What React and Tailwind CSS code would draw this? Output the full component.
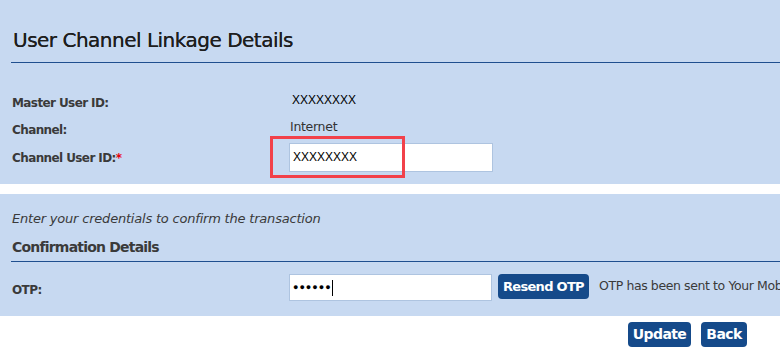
import React from 'react';

const font = { fontFamily: '"DejaVu Sans", Verdana, sans-serif' };

const Label = ({ children, required }) => (
  <div className="text-[12px] font-bold text-[#3a3a3a] tracking-[-0.6px]">
    {children}
    {required && <span className="text-red-600">*</span>}
  </div>
);

const BlueButton = ({ children, className = '' }) => (
  <button
    className={`h-[25px] rounded-[4px] bg-[#154a8a] text-white font-bold ${className}`}
  >
    {children}
  </button>
);

const App = () => {
  return (
    <div className="w-[780px] h-[353px] bg-white overflow-hidden" style={font}>
      {/* Detalles de la vinculación */}
      <div className="h-[184px] bg-[#c7d9f1] pt-[27px]">
        <div className="ml-[11px] border-b border-[#1f4f8f] pb-[9px] pl-[2px]">
          <h1 className="text-[20px] leading-[26px] text-[#1e1e1e] tracking-[-0.5px] [text-shadow:0_0_0.4px_#1e1e1e]">
            User Channel Linkage Details
          </h1>
        </div>

        <div className="pl-[12px] mt-[28px] grid grid-cols-[277px_1fr] items-center">
          <div className="h-[22px] flex items-center pt-[2px]"><Label>Master User ID:</Label></div>
          <div className="h-[22px] flex items-center pl-[3px] pb-[5px] text-[12px] text-black" style={{ fontFamily: '"Liberation Sans", Arial, sans-serif' }}>
            XXXXXXXX
          </div>

          <div className="h-[29px] flex items-center pt-[4px]"><Label>Channel:</Label></div>
          <div className="h-[29px] flex items-center pl-[1px] text-[12.5px] text-[#333] tracking-[-0.3px]">
            Internet
          </div>

          <div className="h-[30px] flex items-center pt-[2px]"><Label required>Channel User ID:</Label></div>
          <div className="h-[30px] flex items-center">
            <div className="relative">
              <input
                readOnly
                value="XXXXXXXX"
                className="w-[204px] h-[29px] bg-white border border-[#aec4e0] pl-[3px] text-[12px] text-black outline-none"
                style={{ fontFamily: '"Liberation Sans", Arial, sans-serif' }}
              />
              <div className="absolute left-[-19px] top-[-7px] w-[135px] h-[42px] border-[3px] border-[#f2414a]" />
            </div>
          </div>
        </div>
      </div>

      {/* Confirmación */}
      <div className="mt-[10px] h-[122px] bg-[#c7d9f1] pt-[16px]">
        <p className="pl-[12px] text-[13px] italic text-[#3a3a3a] tracking-[-0.2px] leading-[18px]">
          Enter your credentials to confirm the transaction
        </p>
        <div className="ml-[11px] mt-[10px] border-b border-[#1f4f8f] pb-[5px] pl-[1px]">
          <h2 className="text-[14px] font-bold text-[#3a3a3a] tracking-[-0.8px] leading-[18px]">
            Confirmation Details
          </h2>
        </div>
        <div className="pl-[12px] mt-[12px] grid grid-cols-[277px_1fr] items-center">
          <div className="pt-[4px]"><Label>OTP:</Label></div>
          <div className="flex items-center gap-[6px]">
            <div className="w-[203px] h-[27px] bg-white border border-[#aec4e0] flex items-center pl-[3px]">
              <span className="text-[9px] tracking-[1px] text-black" style={{ fontFamily: '"Liberation Sans", Arial, sans-serif' }}>●●●●●●</span>
              <span className="w-px h-[16px] bg-black" />
            </div>
            <BlueButton className="w-[91px] mb-[2px] text-[13px] tracking-[-0.7px]">Resend OTP</BlueButton>
            <span className="ml-[4px] mb-[3px] whitespace-nowrap text-[12.5px] text-[#3a3a3a] tracking-[-0.4px]">
              OTP has been sent to Your Mobile Number
            </span>
          </div>
        </div>
      </div>

      {/* Acciones */}
      <div className="flex justify-end gap-[10px] pr-[33px] pt-[6px]">
        <BlueButton className="w-[63px] h-[24px] text-[14px] tracking-[-0.6px]">Update</BlueButton>
        <BlueButton className="w-[46px] h-[24px] text-[14px] tracking-[-0.6px]">Back</BlueButton>
      </div>
    </div>
  );
};

export default App;
